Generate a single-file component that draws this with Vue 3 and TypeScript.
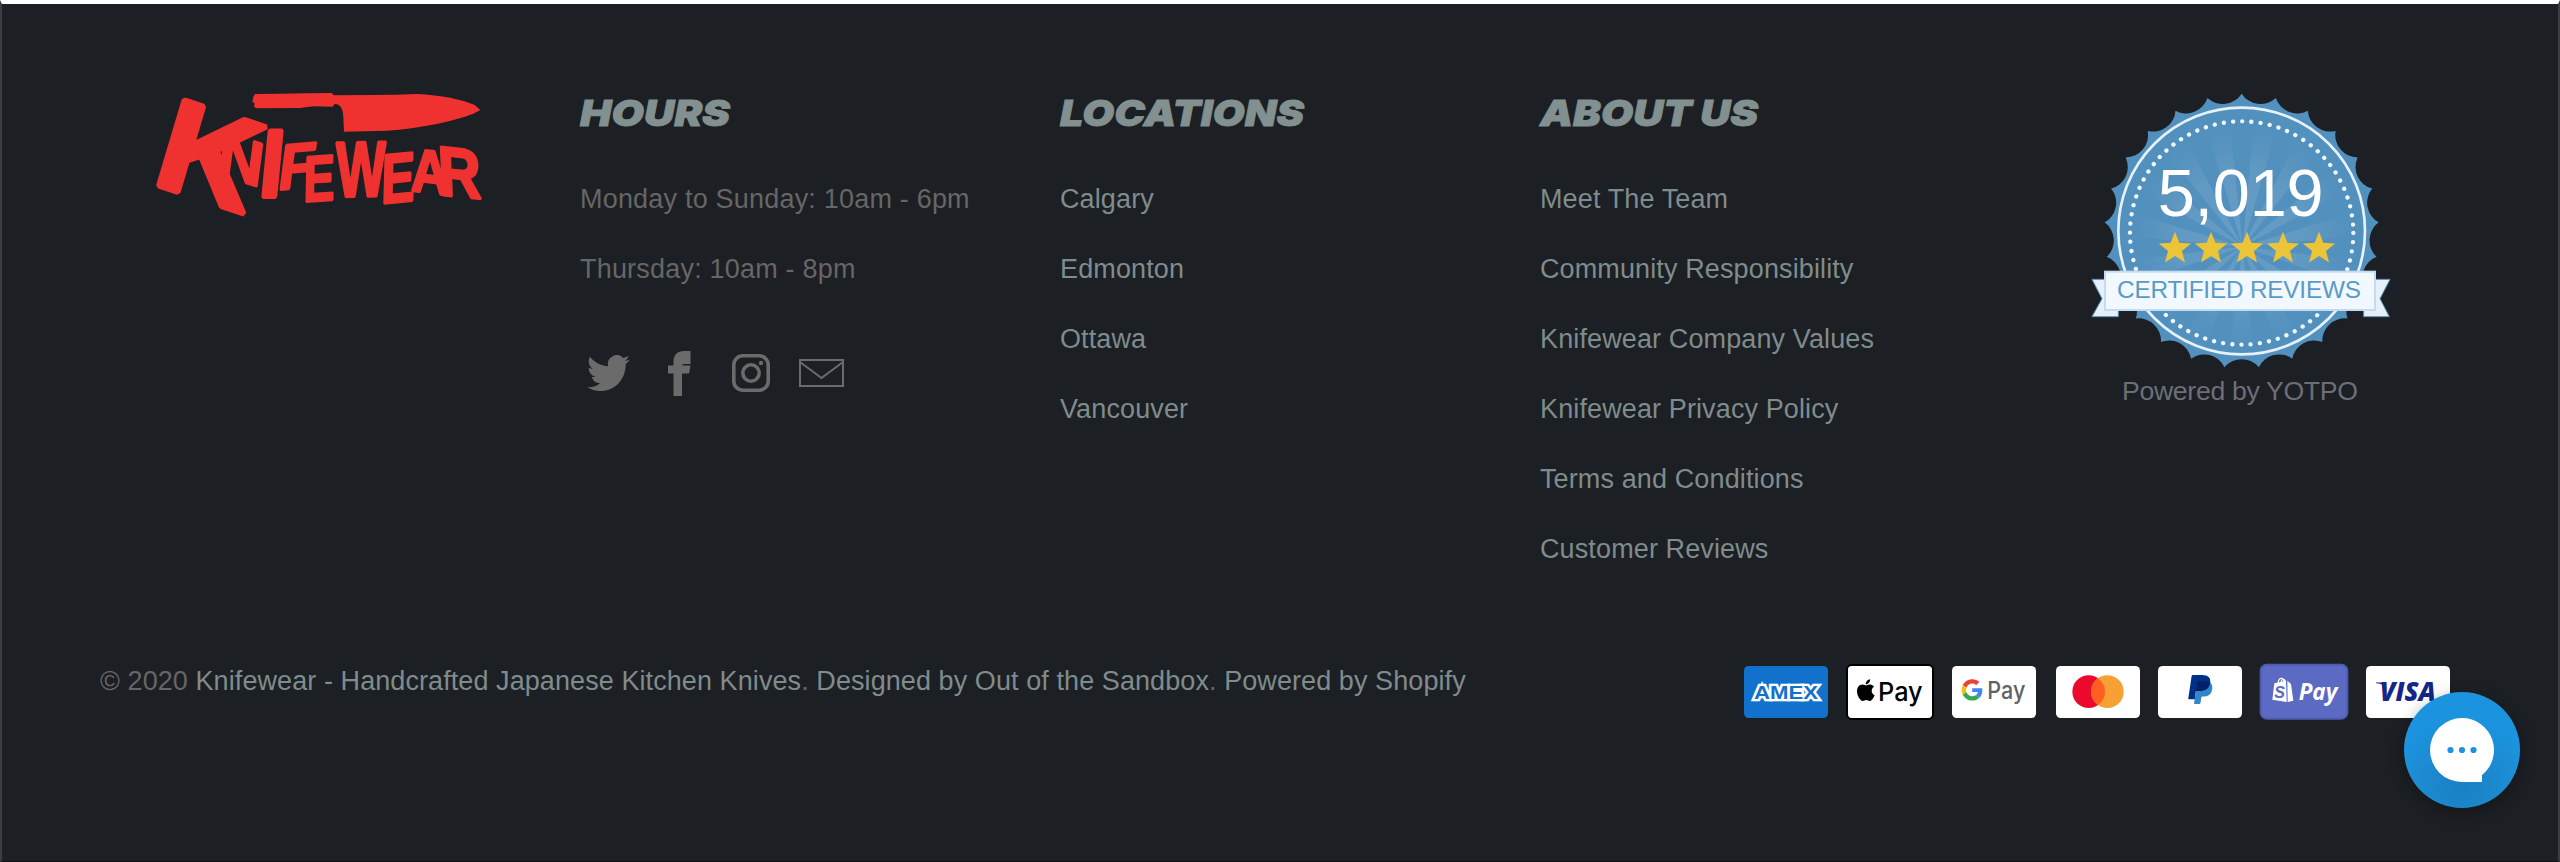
<script setup lang="ts">
interface LinkColumn {
  title: string
  width: number
  links: string[]
}

interface BrushLetter {
  ch: string
  matrix: string
}

const columns: LinkColumn[] = [
  { title: 'LOCATIONS', width: 244, links: ['Calgary', 'Edmonton', 'Ottawa', 'Vancouver'] },
  {
    title: 'ABOUT US',
    width: 218,
    links: [
      'Meet The Team',
      'Community Responsibility',
      'Knifewear Company Values',
      'Knifewear Privacy Policy',
      'Terms and Conditions',
      'Customer Reviews',
    ],
  },
]

const hours: string[] = ['Monday to Sunday: 10am - 6pm', 'Thursday: 10am - 8pm']

const brush: BrushLetter[] = [
  { ch: 'K', matrix: 'matrix(3.95 1.3 -1.12 3.75 30 309)' },
  { ch: 'N', matrix: 'matrix(1.85 .6 -.25 1.85 228 280)' },
  { ch: 'I', matrix: 'matrix(2.6 0 -.28 2.9 352 352)' },
  { ch: 'F', matrix: 'matrix(1.75 -.15 -.25 1.95 410 330)' },
  { ch: 'E', matrix: 'matrix(1.4 -.1 -.04 1.95 490 366)' },
  { ch: 'W', matrix: 'matrix(1.58 -.03 0 2.35 589 350)' },
  { ch: 'E', matrix: 'matrix(1.5 -.15 -.05 2.1 723 371)' },
  { ch: 'A', matrix: 'matrix(1.6 .2 0 1.85 812 332)' },
  { ch: 'R', matrix: 'matrix(1.78 .18 .1 2.1 898 344)' },
]

const CX = 515
const CY = 453
const point = (r: number, deg: number, cx = CX, cy = CY): string => {
  const a = ((deg - 90) * Math.PI) / 180
  return `${(cx + r * Math.cos(a)).toFixed(1)} ${(cy + r * Math.sin(a)).toFixed(1)}`
}

const PEAKS = 25
const sealPath =
  `M${point(412, 0)}` +
  Array.from({ length: PEAKS }, (_, i) => `A67 67 0 0 0 ${point(412, ((i + 1) * 360) / PEAKS)}`).join('') +
  'Z'

const rays: string[] = Array.from({ length: 15 }, (_, i) => {
  const start = 6 + i * 24
  return `M518 500L${point(330, start, 515, 470)}L${point(330, start + 12, 515, 470)}Z`
})

const starPath = (cx: number): string =>
  'M' + Array.from({ length: 10 }, (_, i) => point(i % 2 ? 22 : 51, i * 36, cx, 506)).join('L') + 'Z'
const stars: string[] = [315, 423, 531, 639, 747].map(starPath)
</script>

<template>
  <footer class="footer">
    <div class="grid">
      <div class="brand">
        <svg class="logo" viewBox="0 0 1080 450" role="img" aria-label="Knifewear">
          <path
            d="M345 42L420 41L500 40L575 39L582 46L700 45L768 44L830 42C905 46 965 58 1004 75L1021 90L1000 101C945 122 840 146 740 152L612 155L610 112C609 88 603 73 584 71L578 80L520 79L480 84L350 85L342 80L344 70L337 66L340 50Z"
          />
          <text v-for="(l, i) in brush" :key="i" :transform="l.matrix">{{ l.ch }}</text>
        </svg>
      </div>

      <section>
        <h2><svg viewBox="0 0 155 44" class="title hours-title"><text x="1" y="36" textLength="150" lengthAdjust="spacingAndGlyphs">HOURS</text></svg></h2>
        <p v-for="h in hours" :key="h" class="row plain">{{ h }}</p>
        <div class="social">
          <a><svg width="43" height="36" viewBox="0 2.2 24 19.5" preserveAspectRatio="none"><path d="M23.953 4.57a10 10 0 01-2.825.775 4.958 4.958 0 002.163-2.723c-.951.555-2.005.959-3.127 1.184a4.92 4.92 0 00-8.384 4.482C7.69 8.095 4.067 6.13 1.64 3.162a4.822 4.822 0 00-.666 2.475c0 1.71.87 3.213 2.188 4.096a4.904 4.904 0 01-2.228-.616v.06a4.923 4.923 0 003.946 4.827 4.996 4.996 0 01-2.212.085 4.936 4.936 0 004.604 3.417 9.867 9.867 0 01-6.102 2.105c-.39 0-.779-.023-1.17-.067a13.995 13.995 0 007.557 2.209c9.053 0 13.998-7.496 13.998-13.985 0-.21 0-.42-.015-.63A9.935 9.935 0 0024 4.59z" /></svg></a>
          <a><svg class="fb" width="23" height="45" viewBox="0 0 23 45"><path d="M5.5 45V22.5H0V14.5H5.5V11C5.5 3.5 9.5 0 16 0H22.5V13H16.5C14.8 13 14.3 13.5 14.3 14.5H22.5L21 22.5H14V45Z" /></svg></a>
          <a><svg width="38" height="38" viewBox="0 0 38 38"><rect x="1.8" y="1.8" width="34.4" height="34.4" rx="9" class="line" /><circle cx="19" cy="19" r="8.2" class="line" /><circle cx="29" cy="9" r="2.2" /></svg></a>
          <a><svg width="45" height="28" viewBox="0 0 45 28"><path class="thin" d="M1 1H44V27H1ZM1 3L22.5 19L44 3" /></svg></a>
        </div>
      </section>

      <section v-for="c in columns" :key="c.title">
        <h2>
          <svg class="title" :viewBox="`0 0 ${c.width + 6} 44`" :style="{ width: `${c.width + 6}px` }">
            <text x="1" y="36" :textLength="c.width" lengthAdjust="spacingAndGlyphs">{{ c.title }}</text>
          </svg>
        </h2>
        <p v-for="l in c.links" :key="l" class="row link"><a>{{ l }}</a></p>
      </section>

      <div class="reviews">
        <svg class="seal" viewBox="0 0 1020 1020">
          <defs>
            <radialGradient id="rayFade" gradientUnits="userSpaceOnUse" cx="515" cy="470" r="330">
              <stop offset="0" stop-color="#72a5cb" stop-opacity=".65" />
              <stop offset=".6" stop-color="#6fa2c6" stop-opacity=".5" />
              <stop offset="1" stop-color="#6a9fc5" stop-opacity="0" />
            </radialGradient>
          </defs>
          <path :d="sealPath" fill="#5290be" />
          <path v-for="(r, i) in rays" :key="i" :d="r" fill="url(#rayFade)" />
          <circle cx="515" cy="453" r="370" fill="none" stroke="#e6f1fa" stroke-width="8" />
          <circle cx="515" cy="459" r="335" fill="none" stroke="#f0f7fd" stroke-width="13" stroke-linecap="round" stroke-dasharray="0.1 27.596" />
          <path d="M66 598H145V710H66L96 656ZM960 598H881V710H958L930 656Z" fill="#e6f0fa" stroke="#5c91b8" stroke-width="3" />
          <rect x="105" y="575" width="810" height="115" fill="#f1f8ff" stroke="#c5dcee" stroke-width="6" />
          <text x="263" y="408" textLength="498" class="count">5,019</text>
          <path v-for="(s, i) in stars" :key="'s' + i" :d="s" fill="#ecc438" />
          <text x="141" y="655" textLength="732" class="ribbon">CERTIFIED REVIEWS</text>
          <text x="156" y="960" textLength="708" class="powered">Powered by YOTPO</text>
        </svg>
      </div>
    </div>

    <div class="bottom">
      <p class="copy">© 2020 <a>Knifewear - Handcrafted Japanese Kitchen Knives</a>. <a>Designed by Out of the Sandbox</a>. <a>Powered by Shopify</a></p>
      <div class="cards">
        <svg class="card" viewBox="0 0 252 156">
          <rect width="252" height="156" rx="14" fill="#1271cc" />
          <text x="30" y="98" textLength="192" lengthAdjust="spacingAndGlyphs" class="amex">AMEX</text>
        </svg>
        <svg class="card" viewBox="0 0 252 156">
          <rect x="-3" y="-3" width="258" height="162" rx="14" fill="#fff" stroke="#000" stroke-width="6" />
          <path transform="translate(21 40) scale(2.7)" d="M12.152 6.896c-.948 0-2.415-1.078-3.96-1.04-2.04.027-3.91 1.183-4.961 3.014-2.117 3.675-.546 9.103 1.519 12.09 1.013 1.454 2.208 3.09 3.792 3.039 1.52-.065 2.09-.987 3.935-.987 1.831 0 2.35.987 3.96.948 1.637-.026 2.676-1.48 3.676-2.948 1.156-1.688 1.636-3.325 1.662-3.415-.039-.013-3.182-1.221-3.22-4.857-.026-3.04 2.48-4.494 2.597-4.559-1.429-2.09-3.623-2.324-4.39-2.376-2-.156-3.675 1.09-4.61 1.09zM15.53 3.83c.843-1.012 1.4-2.427 1.245-3.83-1.207.052-2.662.805-3.532 1.818-.78.896-1.454 2.338-1.273 3.714 1.338.104 2.715-.688 3.559-1.701" />
          <text x="90" y="104" textLength="134" lengthAdjust="spacingAndGlyphs" class="apple">Pay</text>
        </svg>
        <svg class="card" viewBox="0 0 252 156">
          <rect width="252" height="156" rx="14" fill="#fff" />
          <g transform="translate(29 40) scale(1.32)">
            <path fill="#ea4335" d="M24 9.500c3.540 0 6.710 1.220 9.210 3.600l6.850-6.850C35.900 2.380 30.470 0 24 0 14.620 0 6.510 5.380 2.560 13.220l7.980 6.190C12.430 13.720 17.740 9.500 24 9.500z" />
            <path fill="#4285f4" d="M46.980 24.550c0-1.570-.15-3.090-.38-4.550H24v9.020h12.940c-.58 2.960-2.260 5.480-4.780 7.180l7.730 6c4.510-4.180 7.090-10.360 7.090-17.650z" />
            <path fill="#fbbc05" d="M10.530 28.590c-.48-1.450-.76-2.990-.76-4.590s.27-3.140.76-4.590l-7.980-6.190C.920 16.460 0 20.120 0 24c0 3.880.92 7.540 2.560 10.780l7.970-6.190z" />
            <path fill="#34a853" d="M24 48c6.480 0 11.930-2.130 15.890-5.810l-7.730-6c-2.150 1.450-4.920 2.300-8.160 2.300-6.260 0-11.570-4.220-13.470-9.910l-7.980 6.190C6.510 42.620 14.620 48 24 48z" />
          </g>
          <text x="106" y="100" textLength="114" lengthAdjust="spacingAndGlyphs" class="gpay">Pay</text>
        </svg>
        <svg class="card" viewBox="0 0 252 156">
          <rect width="252" height="156" rx="14" fill="#fff" />
          <circle cx="98" cy="77" r="49" fill="#eb0a2b" />
          <circle cx="154" cy="77" r="49" fill="#f7a033" />
          <path d="M126 36.800a49 49 0 0 1 0 80.400a49 49 0 0 1 0-80.400z" fill="#ff5f20" />
        </svg>
        <svg class="card paypal" viewBox="0 0 252 156">
          <rect width="252" height="156" rx="14" fill="#fff" />
          <g transform="translate(-2 -6) scale(6.63)">
            <path fill="#003087" d="M23.900 8.300c.2-1 0-1.700-.6-2.300-.6-.7-1.700-1-3.100-1h-4.100c-.3 0-.5.2-.6.5L14 15.600c0 .2.1.4.3.4H17l.4-3.400 1.800-2.200 4.700-2.100z" />
            <path fill="#3086c8" d="M23.900 8.300l-.2.2c-.5 2.800-2.200 3.800-4.600 3.800H18c-.3 0-.5.2-.6.5l-.6 3.900-.2 1c0 .2.1.4.3.4H19c.3 0 .5-.2.5-.4v-.1l.4-2.400v-.1c0-.2.3-.4.5-.4h.3c2.100 0 3.700-.8 4.100-3.200.2-1 .1-1.800-.4-2.400-.1-.5-.3-.7-.5-.8z" />
            <path fill="#012169" d="M23.300 8.100c-.1-.1-.2-.1-.3-.1-.1 0-.2 0-.3-.1-.3-.1-.7-.1-1.100-.1h-3c-.1 0-.2 0-.2.1-.2.1-.3.2-.3.4l-.7 4.400v.1c0-.3.3-.5.6-.5h1.300c2.500 0 4.100-1 4.600-3.800v-.2c-.1-.1-.3-.2-.5-.2h-.1z" />
          </g>
        </svg>
        <svg class="card" viewBox="0 0 252 156">
          <rect x="-4" y="-4" width="260" height="162" rx="18" fill="#5c6ac4" stroke="#4d5bb0" stroke-width="6" />
          <path d="M37 52L72 44L74 108L31 101Z" fill="#fff" />
          <path d="M76 44L87 54L94 104L77 108Z" fill="#fff" />
          <path d="M48 52C49 42 54 36 59 37C64 38 66 42 66 48M57 48C59 39 65 36 70 45" fill="none" stroke="#fff" stroke-width="3.500" />
          <text x="37" y="96" class="bag">S</text>
          <text x="110" y="101" textLength="116" lengthAdjust="spacingAndGlyphs" class="shop">Pay</text>
        </svg>
        <svg class="card" viewBox="0 0 252 156">
          <rect width="252" height="156" rx="14" fill="#fff" />
          <path d="M30 49.500H50L56 60C48 55 40 53 30 52Z" fill="#142688" />
          <text x="41" y="104" textLength="168" lengthAdjust="spacingAndGlyphs" class="visa">VISA</text>
        </svg>
      </div>
    </div>

    <button class="chat" aria-label="Chat">
      <svg viewBox="0 0 116 116">
        <path d="M58 26A32 32 0 0 1 78 83V90H58A32 32 0 0 1 58 26Z" fill="#fff" />
        <g fill="#1b93e0"><circle cx="46.500" cy="58" r="3.100" /><circle cx="58" cy="58" r="3.100" /><circle cx="69.500" cy="58" r="3.100" /></g>
      </svg>
    </button>
  </footer>
</template>

<style>
body {
  background: #1c1f23;
}
</style>

<style scoped>
.footer {
  position: relative;
  box-sizing: border-box;
  width: 2560px;
  height: 862px;
  overflow: hidden;
  padding: 76px 60px 0 98px;
  border: solid #3a3d41;
  border-width: 4px 2px 1px;
  border-top-color: #fff;
  border-bottom-color: #111417;
  background: #1c1f23;
  color: #666;
  font: 27px 'Liberation Sans', Arial, sans-serif;
  letter-spacing: 0.2px;
}
.grid {
  display: grid;
  grid-template-columns: repeat(5, 480px);
  height: 550px;
}
.brand {
  padding-left: 40px;
}
.logo {
  display: block;
  width: 360px;
  height: 150px;
  overflow: visible;
  fill: #ef3230;
}
.logo text {
  font: bold 100px 'Liberation Sans', Arial, sans-serif;
  letter-spacing: 0;
  stroke: #ef3230;
  stroke-width: 4px;
  stroke-linejoin: bevel;
}
h2 {
  height: 83.6px;
  margin: 0;
  padding-top: 10px;
  box-sizing: border-box;
}
.title {
  display: block;
  height: 44px;
  margin-left: -1px;
  overflow: visible;
}
.hours-title {
  width: 155px;
}
.title text {
  font: italic 900 36px Inter, 'Liberation Sans', sans-serif;
  letter-spacing: 0;
  fill: #829090;
  stroke: #829090;
  stroke-width: 0.8px;
}
.row {
  height: 70px;
  margin: 0;
  line-height: 70px;
  white-space: nowrap;
}
.link {
  letter-spacing: 0.12px;
}
a {
  color: #7f8c8d;
}
.social {
  display: flex;
  margin: 34px 0 0 -7px;
  height: 71px;
}
.social a {
  display: grid;
  width: 71px;
  place-items: center;
}
.social svg {
  fill: #6b6b6b;
}
.social .line {
  fill: none;
  stroke: #6b6b6b;
  stroke-width: 3.6px;
}
.social .thin {
  fill: none;
  stroke: #6b6b6b;
  stroke-width: 2px;
}
.reviews {
  padding-left: 50px;
}
.seal {
  display: block;
  width: 340px;
  height: 340px;
}
.seal text {
  font-family: 'Liberation Sans', Arial, sans-serif;
  letter-spacing: 0;
}
.count {
  font-size: 200px;
  fill: #fff;
}
.ribbon {
  font-size: 73px;
  fill: #5c9ac5;
}
.powered {
  font-size: 80px;
  fill: #6c6e79;
}
.bottom {
  display: flex;
  justify-content: space-between;
  align-items: flex-start;
  padding-right: 48px;
}
.copy {
  margin: 16px 0 0;
  line-height: 70px;
  letter-spacing: 0.08px;
  white-space: nowrap;
}
.cards {
  display: flex;
  gap: 20px;
  margin-top: 36px;
}
.card {
  display: block;
  flex: none;
  width: 84px;
  height: 52px;
  overflow: visible;
}
.paypal {
  margin-left: -2px;
}
.card text {
  letter-spacing: 0;
}
.amex {
  font: bold 54px 'Liberation Sans', sans-serif;
  fill: #1271cc;
  stroke: #fff;
  stroke-width: 13px;
  paint-order: stroke;
}
.apple {
  font: 500 78px Inter, sans-serif;
}
.gpay {
  font: 500 73px Inter, sans-serif;
  fill: #5f6368;
}
.bag {
  font: italic bold 48px 'Liberation Sans', sans-serif;
  fill: #5c6ac4;
}
.shop {
  font: italic bold 70px 'Open Sans', sans-serif;
  fill: #fff;
}
.visa {
  font: italic 800 77px 'Open Sans', sans-serif;
  fill: #142688;
}
.chat {
  position: absolute;
  top: 688px;
  left: 2402px;
  width: 116px;
  height: 116px;
  padding: 0;
  border: 0;
  border-radius: 50%;
  background: radial-gradient(circle at 50% 82%, #1a80c3 0, #1c89cf 32%, #1c93df 62%);
  box-shadow: 0 4px 16px rgba(0, 0, 0, 0.3);
}
.chat svg {
  display: block;
  width: 116px;
  height: 116px;
}
</style>
